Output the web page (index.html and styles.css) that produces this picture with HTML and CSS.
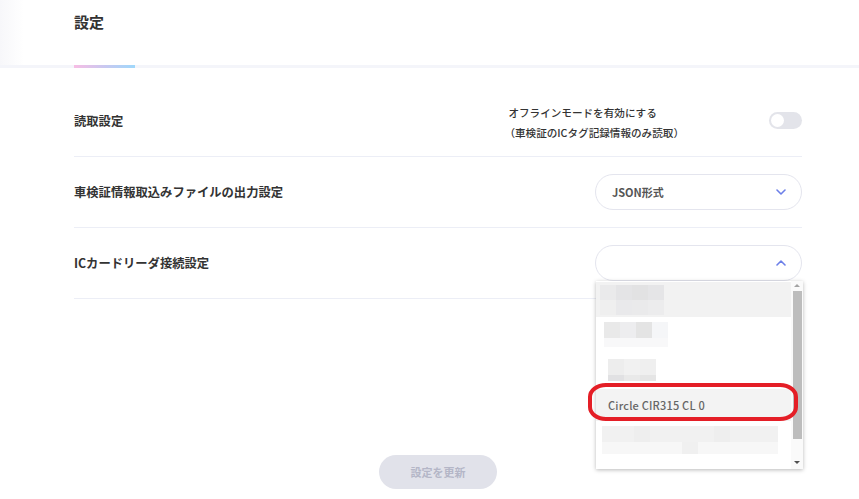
FILE: index.html
```html
<!DOCTYPE html>
<html lang="ja">
<head>
  <meta charset="UTF-8" />
  <title>設定</title>
  <link rel="stylesheet" href="styles.css">
</head>
<body>

  <!-- Header -->
  <header class="page-header">
    <h1>設定</h1>
    <div class="tab-line"><span></span></div>
  </header>

  <!-- Settings -->
  <main class="settings">
    <div class="row">
      <div class="label">読取設定</div>
      <div class="offline">
        <div class="offline-text">
          <div>オフラインモードを有効にする</div>
          <div class="sub">（車検証のICタグ記録情報のみ読取）</div>
        </div>
        <div class="toggle"><span class="knob"></span></div>
      </div>
    </div>

    <div class="row">
      <div class="label">車検証情報取込みファイルの出力設定</div>
      <div class="select">
        <span>JSON形式</span>
        <svg width="10" height="6" viewBox="0 0 10 6"><path d="M1 1l4 4 4-4" fill="none" stroke="#6c7fe8" stroke-width="1.6" stroke-linecap="round" stroke-linejoin="round"/></svg>
      </div>
    </div>

    <div class="row">
      <div class="label">ICカードリーダ接続設定</div>
      <div class="select-wrap">
        <div class="select open">
          <span></span>
          <svg width="10" height="6" viewBox="0 0 10 6"><path d="M1 5l4-4 4 4" fill="none" stroke="#6c7fe8" stroke-width="1.6" stroke-linecap="round" stroke-linejoin="round"/></svg>
        </div>

        <!-- dropdown list -->
        <div class="dropdown">
          <div class="options">
            <div class="option active">
              <div class="mosaic m1">
                <i></i><i></i><i></i><i></i>
                <i></i><i></i><i></i><i></i>
              </div>
            </div>
            <div class="option">
              <div class="mosaic m2">
                <i></i><i></i><i></i><i></i>
                <i></i><i></i><i></i><i></i>
              </div>
            </div>
            <div class="option">
              <div class="mosaic m3">
                <i></i><i></i><i></i>
                <i></i><i></i><i></i>
              </div>
            </div>
            <div class="option picked">Circle CIR315 CL 0</div>
            <div class="option">
              <div class="mosaic m5">
                <i></i><i></i><i></i><i></i><i></i><i></i><i></i><i></i><i></i><i></i><i></i>
                <i></i><i></i><i></i><i></i><i></i><i></i><i></i><i></i><i></i><i></i><i></i>
              </div>
            </div>
          </div>
          <div class="scrollbar">
            <span class="arrow up"></span>
            <span class="thumb"></span>
            <span class="arrow down"></span>
          </div>
          <div class="highlight"></div>
        </div>
      </div>
    </div>

    <div class="actions">
      <button class="btn-update" disabled>設定を更新</button>
    </div>
  </main>

</body>
</html>
```

FILE: styles.css
```css
body {
  margin: 0;
  font-family: "Noto Sans CJK JP", "Noto Sans", sans-serif;
  background: #fff;
  color: #333;
}

/* Header */
.page-header {
  height: 65px;
  position: relative;
  background: linear-gradient(to right, #f7f7fa, #fff 24px);
}

.page-header h1 {
  margin: 0;
  padding: 11px 0 0 74px;
  font-size: 15px;
  font-weight: 700;
  line-height: 22px;
  color: #333;
}

.tab-line {
  position: absolute;
  left: 0;
  right: 0;
  bottom: -3px;
  height: 3px;
  background: #f4f5fa;
}

.tab-line span {
  display: block;
  margin-left: 74px;
  width: 61px;
  height: 3px;
  background: linear-gradient(to right, #f7bde4, #c9c8f0 50%, #9fd8fb);
}

/* Settings rows */
.settings {
  width: 728px;
  margin: 21px 0 0 74px;
}

.row {
  height: 70px;
  display: flex;
  align-items: center;
  justify-content: space-between;
  border-bottom: 1px solid #eceef6;
}

.label {
  font-size: 12.3px;
  font-weight: 700;
  color: #333;
}

.offline {
  display: flex;
  align-items: center;
}

.offline-text {
  font-size: 10.6px;
  font-weight: 500;
  line-height: 20px;
  color: #333;
  margin-right: 85px;
  margin-top: 4px;
}

.offline-text .sub {
  margin-left: -4px;
}

.toggle {
  width: 33px;
  height: 17px;
  border-radius: 9px;
  background: #e3e4ea;
  position: relative;
  margin-top: -2px;
}

.toggle .knob {
  position: absolute;
  left: 2px;
  top: 2px;
  width: 13px;
  height: 13px;
  border-radius: 50%;
  background: #fff;
}

/* Selects */
.select {
  box-sizing: border-box;
  width: 207px;
  height: 36px;
  border: 1px solid #e4e5ee;
  border-radius: 18px;
  display: flex;
  align-items: center;
  justify-content: space-between;
  padding: 0 15px 0 16px;
  font-size: 11px;
  font-weight: 700;
  color: #555;
}

.select-wrap {
  position: relative;
}

/* Dropdown */
.dropdown {
  position: absolute;
  top: 36px;
  left: 1px;
  width: 207px;
  height: 188px;
  background: #fff;
  box-shadow: 0 1px 4px rgba(0, 0, 0, 0.28);
  z-index: 2;
  display: flex;
}

.options {
  flex: 1;
  padding-top: 1px;
}

.option {
  height: 35px;
  display: flex;
  align-items: center;
  padding-left: 4px;
  font-size: 11px;
  font-weight: 500;
  color: #666;
}

.option.active {
  background: #f2f2f2;
}

.option.picked {
  background: #f3f3f3;
  padding-left: 12px;
  height: 32px;
  margin: 2px 0 1px;
  letter-spacing: 0.2px;
}

/* blurred entries */
.mosaic {
  display: grid;
  grid-auto-rows: 15px;
}

.mosaic i {
  display: block;
}

.m1 {
  grid-template-columns: repeat(4, 16px);
}
.m1 i:nth-child(1) { background: #eaeaeb; }
.m1 i:nth-child(2) { background: #e4e4e6; }
.m1 i:nth-child(3) { background: #e2e2e3; }
.m1 i:nth-child(4) { background: #e5e5e7; }
.m1 i:nth-child(5) { background: #efefef; }
.m1 i:nth-child(6) { background: #e9e9eb; }
.m1 i:nth-child(7) { background: #eaeaeb; }
.m1 i:nth-child(8) { background: #ececed; }

.m2 {
  margin-left: 4px;
  grid-template-columns: repeat(4, 16px);
  grid-template-rows: 16px 9px;
}
.m2 i:nth-child(1) { background: #e9e9e9; }
.m2 i:nth-child(2) { background: #ededef; }
.m2 i:nth-child(3) { background: #e4e4e4; }
.m2 i:nth-child(4) { background: #f5f6f8; }
.m2 i:nth-child(n+5) { background: #f8f8f9; }

.m3 {
  margin-left: 8px;
  grid-template-columns: repeat(3, 16px);
  grid-template-rows: 16px 6px;
}
.m3 i:nth-child(1) { background: #ededed; }
.m3 i:nth-child(2) { background: #f1f1f1; }
.m3 i:nth-child(3) { background: #efefef; }
.m3 i:nth-child(4) { background: #e1e1e3; }
.m3 i:nth-child(5) { background: #e9e9e9; }
.m3 i:nth-child(6) { background: #e5e5e5; }

.m5 {
  margin-left: 2px;
  grid-template-columns: repeat(11, 16px);
  grid-template-rows: 16px 12px;
}
.m5 i { background: #f1f1f1; }
.m5 i:nth-child(n+12) { background: #f7f7f7; }
.m5 i:nth-child(3), .m5 i:nth-child(8) { background: #eeeeee; }
.m5 i:nth-child(17) { background: #f0f0f0; }

/* fake scrollbar */
.scrollbar {
  width: 12px;
  display: flex;
  flex-direction: column;
  align-items: center;
  background: #fafafa;
}

.arrow {
  width: 0;
  height: 0;
  border-left: 3px solid transparent;
  border-right: 3px solid transparent;
}

.arrow.up {
  margin-top: 3px;
  border-bottom: 3px solid #a3a3a3;
}

.arrow.down {
  margin-top: auto;
  margin-bottom: 5px;
  border-top: 3px solid #505050;
}

.thumb {
  margin-top: 4px;
  width: 9px;
  height: 148px;
  background: #bdbdbd;
}

/* red annotation */
.highlight {
  position: absolute;
  left: -8px;
  top: 102px;
  width: 202px;
  height: 30px;
  border: 4px solid #e41e26;
  border-radius: 18px / 14px;
}

/* Button */
.actions {
  display: flex;
  justify-content: center;
  margin-top: 156px;
}

.btn-update {
  width: 118px;
  height: 34px;
  border: none;
  border-radius: 17px;
  background: #e1e2ea;
  color: #b4b6c7;
  font-family: inherit;
  font-size: 11px;
  font-weight: 700;
}
```
